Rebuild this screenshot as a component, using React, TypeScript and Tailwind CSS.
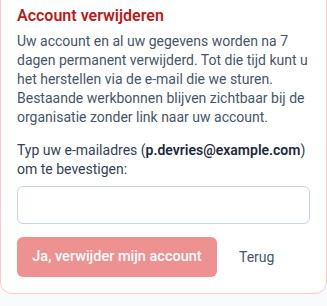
import React from "react";

export default function App() {
  return (
    <div className="min-h-[306px] bg-[#f9fafb] font-[Roboto] overflow-hidden">
      <div className="-mt-[12px] rounded-xl border border-[#fecaca] bg-white p-4">
        <h2 className="text-base font-semibold leading-[21px] text-[#b91c1c]">Account verwijderen</h2>
        <p className="mt-[6px] text-sm leading-[19px] text-[#475569]">
          Uw account en al uw gegevens worden na 7 dagen permanent verwijderd. Tot die tijd kunt u het
          herstellen via de e-mail die we sturen. Bestaande werkbonnen blijven zichtbaar bij de organisatie
          zonder link naar uw account.
        </p>
        <p className="mt-[14px] text-sm leading-[19px] text-[#334155]">
          Typ uw e-mailadres (<span className="font-semibold text-[#1e293b]">p.devries@example.com</span>) om te
          bevestigen:
        </p>
        <input
          type="text"
          className="mt-[7px] block h-[38px] w-full rounded-md border border-[#cbd5e1] bg-white px-3 text-sm outline-none"
        />
        <div className="mt-[13px] flex items-center gap-2">
          <button
            disabled
            className="h-10 w-[200px] rounded-md bg-[#dc2626] text-[14.5px] font-medium text-white opacity-50"
          >
            Ja, verwijder mijn account
          </button>
          <button className="px-[14px] py-2 text-sm text-[#475569]">Terug</button>
        </div>
      </div>
    </div>
  );
}
